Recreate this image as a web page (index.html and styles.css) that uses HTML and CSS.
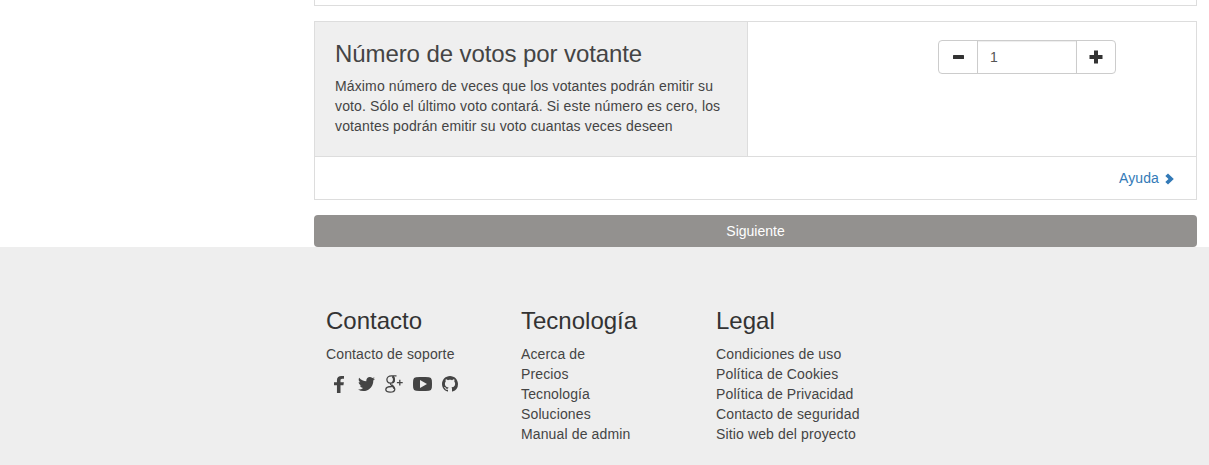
FILE: index.html
```html
<!DOCTYPE html>
<html lang="es">
<head>
<meta charset="utf-8">
<title>Número de votos por votante</title>
<link rel="stylesheet" href="styles.css">
</head>
<body>
<main class="content">
  <div class="previous"></div>
  <section class="field">
    <div class="field-row">
      <div class="field-info">
        <h2 class="title">Número de votos por votante</h2>
        <p class="description">Máximo número de veces que los votantes podrán emitir su<br>voto. Sólo el último voto contará. Si este número es cero, los<br>votantes podrán emitir su voto cuantas veces deseen</p>
      </div>
      <div class="field-control">
        <div class="stepper">
          <button class="step" aria-label="Menos"><svg width="14" height="14" viewBox="0 0 14 14"><rect x="2" y="5" width="11" height="4" rx=".5"/></svg></button>
          <div class="value">1</div>
          <button class="step" aria-label="Más"><svg width="14" height="14" viewBox="0 0 14 14"><path d="M5 0.500h4v4.500h4.500v4H9v4.500H5V9H.5V5H5z"/></svg></button>
        </div>
      </div>
    </div>
    <div class="help"><a class="help-link">Ayuda</a><svg class="chevron" width="9" height="12" viewBox="0 0 9 12"><path d="M3 .5 8.800 6 3 11.500 .3 9 3.500 6 .3 3z"/></svg></div>
  </section>
  <button class="next">Siguiente</button>
</main>
<footer class="footer">
  <div class="column">
    <h2 class="title">Contacto</h2>
    <a class="link">Contacto de soporte</a>
    <div class="social">
      <svg width="10" height="17" viewBox="479 0 864 1664" preserveAspectRatio="none"><path d="M1343 12v264h-157q-86 0-116 36t-30 108v189h293l-39 296h-254v759h-306v-759h-255v-296h255v-218q0-186 104-288.500t277-102.500q147 0 228 12z"/></svg>
      <svg class="twitter" width="17" height="14" viewBox="108 256 1576 1280" preserveAspectRatio="none"><path d="M1684 408q-67 98-162 167 1 14 1 42 0 130-38 259.500t-115.500 248.500-184.500 210.500-258 146-323 54.500q-271 0-496-145 35 4 78 4 225 0 401-138-105-2-188-64.500t-114-159.500q33 5 61 5 43 0 85-11-112-23-185.500-111.500t-73.500-205.500v-4q68 38 146 41-66-44-105-115t-39-154q0-88 44-163 121 149 294.500 238.500t371.500 99.500q-8-38-8-74 0-134 94.500-228.500t228.500-94.500q140 0 236 102 109-21 205-78-37 115-142 178 93-10 186-50z"/></svg>
      <svg class="google" width="18" height="18" viewBox="0 0 18 18"><path class="stroke" d="M11.500 .8H6.400C3.700.8 1.900 2.400 1.900 4.600c0 2 1.500 3.500 3.600 3.500 2.300 0 3.900-1.500 3.900-3.700C9.400 2.900 8.700 1.700 7.500 1M6 8C5 9 5.600 9.700 6.800 10.500c1.700 1.100 3 2 3 3.500 0 1.900-1.900 3.200-4.700 3.200-2.600 0-4.300-1-4.300-2.600 0-2 2.400-3.100 6-3.100"/><path class="stem" d="M7.500 1.500c1.900 1.600 1.900 4.700 .2 5.900M6.600 10.200c1.700 1.100 2.700 2.100 2.600 3.700"/><path class="stroke" d="M14.800 4.800v5.800M11.900 7.700h5.800"/></svg>
      <svg class="youtube" width="19" height="14" viewBox="0 0 19 14"><path fill-rule="evenodd" d="M3 .2Q9.500-.3 16 .2 18.500.4 18.800 3q.4 4 0 8-.3 2.600-2.800 2.800-6.500.4-13 0Q.5 13.600.2 11q-.4-4 0-8Q.5.4 3 .2zM7 3v8L14 7z"/></svg>
      <svg class="github" width="16" height="16" viewBox="0 0 16 16"><path d="M8 0C3.580 0 0 3.580 0 8c0 3.540 2.290 6.530 5.470 7.590.4.070.55-.17.55-.38 0-.19-.01-.82-.01-1.490-2.010.37-2.530-.49-2.690-.94-.09-.23-.48-.94-.82-1.130-.28-.15-.68-.52-.01-.53.63-.01 1.080.58 1.230.82.720 1.210 1.870.87 2.330.66.070-.52.280-.87.510-1.070-1.780-.2-3.640-.89-3.640-3.950 0-.87.310-1.590.820-2.150-.08-.2-.36-1.020.080-2.120 0 0 .67-.21 2.200.82.640-.18 1.320-.27 2-.27s1.360.09 2 .27c1.530-1.040 2.200-.82 2.200-.82.440 1.100.160 1.920.080 2.120.510.560.820 1.270.820 2.150 0 3.070-1.870 3.750-3.650 3.950.290.250.540.730.540 1.480 0 1.070-.01 1.930-.01 2.200 0 .21.150.46.550.38A8.010 8.010 0 0016 8c0-4.420-3.580-8-8-8z"/></svg>
    </div>
  </div>
  <div class="column">
    <h2 class="title">Tecnología</h2>
    <a class="link">Acerca de</a>
    <a class="link">Precios</a>
    <a class="link">Tecnología</a>
    <a class="link">Soluciones</a>
    <a class="link">Manual de admin</a>
  </div>
  <div class="column">
    <h2 class="title">Legal</h2>
    <a class="link">Condiciones de uso</a>
    <a class="link">Política de Cookies</a>
    <a class="link">Política de Privacidad</a>
    <a class="link">Contacto de seguridad</a>
    <a class="link">Sitio web del proyecto</a>
  </div>
</footer>
</body>
</html>
```

FILE: styles.css
```css
* { box-sizing: border-box; }
body {
  margin: 0;
  height: 465px;
  overflow: hidden;
  background: #fff;
  color: #444;
  font: 14px/20px "Nimbus Sans", "Liberation Sans", Arial, sans-serif;
}
svg { display: block; flex: none; fill: currentColor; }
button { margin: 0; padding: 0; font: inherit; }
.content { margin: 0 12px 0 314px; }
.previous { height: 6px; border: 1px solid #ddd; border-top: 0; }
.field { height: 179px; margin-top: 15px; border: 1px solid #ddd; }
.field-row { display: flex; height: 135px; border-bottom: 1px solid #ddd; }
.field-info { width: 433px; padding: 19px 0 0 20px; background: #efefef; border-right: 1px solid #ddd; }
.title { margin: 0 0 9px; font-size: 24px; line-height: 26px; font-weight: 400; letter-spacing: -.09px; white-space: nowrap; }
.description { margin: 0; letter-spacing: .138px; white-space: nowrap; }
.field-control { flex: 1; padding: 18px 0 0 190px; }
.stepper { display: flex; width: 178px; height: 34px; border: 1px solid #ccc; border-radius: 4px; }
.step { display: flex; flex: 1; align-items: center; justify-content: center; border: 0; background: none; color: #333; }
.value { width: 100px; padding: 6px 12px; border: 1px solid #ccc; border-width: 0 1px; color: #555; box-shadow: inset 0 1px 1px rgba(0, 0, 0, .075); }
.help { display: flex; height: 42px; align-items: center; justify-content: flex-end; padding-right: 22px; color: #337ab7; }
.help-link { letter-spacing: .1px; }
.chevron { margin: 2px 0 0 6px; }
.next { display: block; width: 100%; height: 32px; margin-top: 15px; border: 0; border-radius: 4px; background: #93918f; color: #fff; }
.footer { display: flex; height: 218px; padding: 61px 0 0 326px; background: #eee; }
.column { width: 195px; }
.footer .title { margin-bottom: 10px; color: #333; letter-spacing: 0; }
.link { display: block; letter-spacing: .13px; white-space: nowrap; }
.social { display: flex; align-items: center; height: 20px; margin-top: 10px; padding-left: 8px; }
.twitter { margin-left: 14px; }
.google { margin-left: 10px; }
.youtube { margin-left: 10px; }
.github { margin-left: 10px; }
.stroke { fill: none; stroke: currentColor; stroke-width: 1.3; }
.stem { fill: none; stroke: currentColor; stroke-width: 2; }
```
